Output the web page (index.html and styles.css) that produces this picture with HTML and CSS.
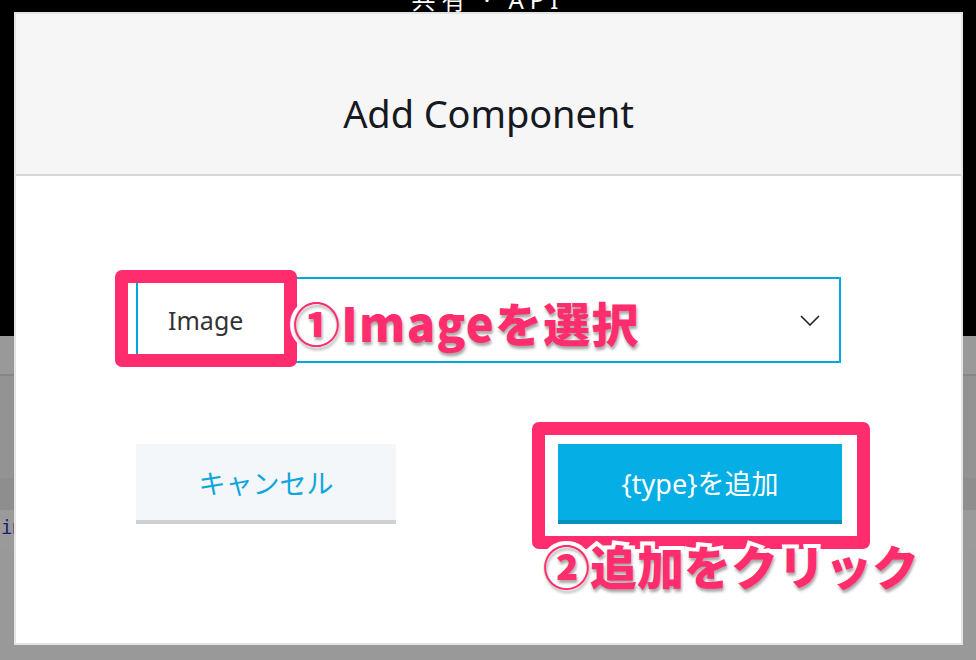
FILE: index.html
```html
<!DOCTYPE html>
<html lang="ja">
<head>
<meta charset="utf-8">
<title>Add Component</title>
<link rel="stylesheet" href="styles.css">
</head>
<body>
<div class="backdrop">
  <div class="bd-top"><span class="bd-title">共有 · API</span></div>
  <div class="bd-bar"></div>
  <div class="bd-mid"></div>
  <div class="bd-row"></div>
  <div class="bd-code">import</div>
</div>

<div class="modal">
  <div class="modal-head">
    <h2 class="modal-title">Add Component</h2>
  </div>
  <div class="modal-body">
    <div class="select">
      <span class="select-value">Image</span>
      <svg class="chevron" width="20" height="11" viewBox="0 0 20 11"><polyline points="1,1 10,10 19,1" fill="none" stroke="#222" stroke-width="1.6"/></svg>
    </div>
    <div class="actions">
      <button class="btn btn-cancel">キャンセル</button>
      <button class="btn btn-add">{type}を追加</button>
    </div>
  </div>

  <div class="mark mark-select"></div>
  <div class="mark mark-add"></div>
  <div class="note note-1">①Imageを選択</div>
  <div class="note note-2">②追加をクリック</div>
</div>
</body>
</html>
```

FILE: styles.css
```css
html, body {
  margin: 0;
  padding: 0;
}
body {
  width: 976px;
  height: 660px;
  overflow: hidden;
  position: relative;
  background: #999999;
  font-family: "Noto Sans", "Noto Sans CJK JP", sans-serif;
}

/* page behind the overlay */
.backdrop {
  display: flex;
  flex-direction: column;
}
.bd-top {
  height: 336px;
  background: #000;
  display: flex;
  justify-content: center;
}
.bd-title {
  color: #fff;
  font-size: 24px;
  line-height: 24px;
  margin-top: -12px;
  letter-spacing: 6px;
  font-family: "Noto Sans", "Noto Sans CJK JP", sans-serif;
}
.bd-bar {
  height: 38px;
  background: #999999;
  border-bottom: 2px solid #878787;
}
.bd-mid {
  height: 102px;
  background: #939393;
}
.bd-row {
  height: 32px;
  background: #8e8e8e;
}
.bd-code {
  height: 40px;
  background: #9a9a9a;
  color: #1d1d6e;
  font-family: "DejaVu Sans Mono", monospace;
  font-size: 19px;
  line-height: 34px;
  padding-left: 1px;
}

/* modal */
.modal {
  position: absolute;
  left: 14px;
  top: 12px;
  width: 949px;
  height: 633px;
  box-sizing: border-box;
  border: 2px solid #e4e4e4;
  background: #fff;
}
.modal-head {
  height: 160px;
  background: #f6f6f6;
  border-bottom: 2px solid #d8d8d8;
  box-sizing: content-box;
}
.modal-title {
  margin: 0;
  padding-top: 76px;
  text-align: center;
  font-weight: 400;
  font-size: 38px;
  line-height: 46px;
  color: #16191f;
  letter-spacing: -0.1px;
}
.modal-body {
  padding: 101px 0 0 120px;
}
.select {
  width: 705px;
  height: 86px;
  box-sizing: border-box;
  border: 2px solid #00a8de;
  display: flex;
  align-items: center;
  justify-content: space-between;
  padding: 0 19px 0 30px;
}
.select-value {
  font-size: 25px;
  color: #333;
}
.chevron {
  display: block;
  margin-top: 1px;
}
.actions {
  width: 706px;
  margin-top: 81px;
  display: flex;
  justify-content: space-between;
}
.btn {
  height: 80px;
  box-sizing: border-box;
  border: 0;
  padding: 0;
  font-family: "Noto Sans", "Noto Sans CJK JP", sans-serif;
  font-size: 27px;
}
.btn-cancel {
  width: 260px;
  background: #f4f7f9;
  border-bottom: 4px solid #cdd1d2;
  color: #0fa6de;
}
.btn-add {
  width: 284px;
  background: #05aee4;
  border-bottom: 4px solid #0290bf;
  color: #fff;
}

/* annotations */
.mark {
  position: absolute;
  box-sizing: border-box;
  border: 13px solid #ff2d6e;
  border-radius: 7px;
}
.mark-select {
  left: 99px;
  top: 256px;
  width: 182px;
  height: 97px;
}
.mark-add {
  left: 516px;
  top: 408px;
  width: 338px;
  height: 127px;
}
.note {
  position: absolute;
  white-space: nowrap;
  font-family: "Noto Sans CJK JP", sans-serif;
  font-weight: 900;
  font-size: 47px;
  line-height: 47px;
  color: #ff2d6e;
  -webkit-text-stroke: 8px #fff;
  paint-order: stroke fill;
  text-shadow: 1px 3px 3px rgba(0, 0, 0, 0.35);
}
.note-1 {
  left: 277px;
  top: 284px;
  letter-spacing: 1.3px;
}
.note-2 {
  left: 527px;
  top: 527px;
}
```
